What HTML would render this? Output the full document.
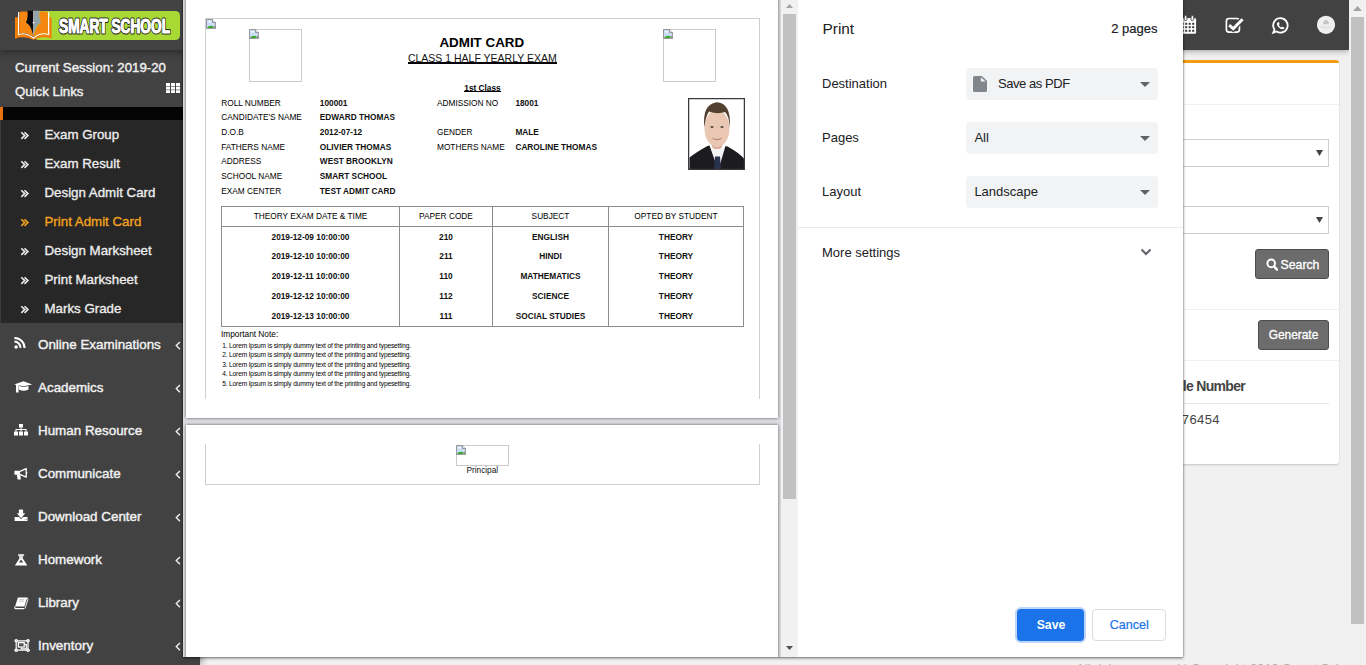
<!DOCTYPE html>
<html><head><meta charset="utf-8">
<style>
*{box-sizing:border-box;margin:0;padding:0}
html,body{width:1366px;height:665px;overflow:hidden;background:#f1f1f1;font-family:"Liberation Sans",sans-serif}
.a{position:absolute}
svg.a{display:block}
</style></head><body>

<div class="a" style="left:1076.00px;top:662.00px;font-size:13px;line-height:13px;font-weight:normal;color:#b0b0b0;white-space:nowrap;">All rights reserved | Copyright 2019 Smart School</div>
<div class="a" style="left:1100px;top:60px;width:239px;height:404px;background:#fff;border-top:3px solid #f39c12;border-radius:3px;box-shadow:0 1px 2px rgba(0,0,0,.18)"></div>
<div class="a" style="left:1100px;top:104px;width:239px;height:1px;background:#f0f0f0"></div>
<div class="a" style="left:1100px;top:139px;width:229px;height:28px;border:1px solid #cfcfcf;background:#fff"></div>
<svg class="a" style="left:1316px;top:150px;" width="7" height="6" viewBox="0 0 7 6"><path d="M0 0H7L3.5 6Z" fill="#444"/></svg>
<div class="a" style="left:1100px;top:206px;width:229px;height:28px;border:1px solid #cfcfcf;background:#fff"></div>
<svg class="a" style="left:1316px;top:217px;" width="7" height="6" viewBox="0 0 7 6"><path d="M0 0H7L3.5 6Z" fill="#444"/></svg>
<div class="a" style="left:1255px;top:249px;width:74px;height:30px;background:#6c6c6c;border:1px solid #4d4d4d;border-radius:3px"></div>
<svg class="a" style="left:1266px;top:258px;" width="12" height="13" viewBox="0 0 12 13"><circle cx="5.2" cy="5.4" r="3.8" fill="none" stroke="#fff" stroke-width="2"/><path d="M8 8.4L11 11.6" stroke="#fff" stroke-width="2.4" stroke-linecap="round"/></svg>
<div class="a" style="left:1280.50px;top:259.09px;font-size:12.3px;line-height:12.3px;font-weight:normal;color:#fff;white-space:nowrap;-webkit-text-stroke:0.3px #fff">Search</div>
<div class="a" style="left:1100px;top:309px;width:239px;height:1px;background:#f0f0f0"></div>
<div class="a" style="left:1258px;top:320px;width:71px;height:30px;background:#6c6c6c;border:1px solid #4d4d4d;border-radius:3px"></div>
<div class="a" style="left:1243.50px;width:100px;text-align:center;top:329.93px;font-size:11.9px;line-height:11.9px;font-weight:normal;color:#fff;white-space:nowrap;-webkit-text-stroke:0.3px #fff">Generate</div>
<div class="a" style="left:1100px;top:360px;width:239px;height:1px;background:#f0f0f0"></div>
<div class="a" style="left:1045.00px;width:200px;text-align:right;top:378.65px;font-size:14px;line-height:14px;font-weight:bold;color:#444;white-space:nowrap;letter-spacing:-0.7px">Mobile Number</div>
<div class="a" style="left:1100px;top:403px;width:229px;height:1px;background:#e6e6e6"></div>
<div class="a" style="left:1020.00px;width:200px;text-align:right;top:413.00px;font-size:13px;line-height:13px;font-weight:normal;color:#444;white-space:nowrap;letter-spacing:0.4px">9876454</div>
<div class="a" style="left:200px;top:0px;width:1149px;height:50px;background:#424242;box-shadow:0 1px 6px rgba(0,0,0,.35)"></div>
<svg class="a" style="left:1178px;top:14px;" width="20" height="22" viewBox="0 0 20 22"><rect x="3.5" y="4" width="14.6" height="15.8" rx="1.5" fill="#fff"/><rect x="3.7" y="8.8" width="2" height="2" fill="#3a3a3a"/><rect x="7.2" y="8.8" width="2" height="2" fill="#3a3a3a"/><rect x="10.7" y="8.8" width="2" height="2" fill="#3a3a3a"/><rect x="14.2" y="8.8" width="2" height="2" fill="#3a3a3a"/><rect x="3.7" y="12.2" width="2" height="2" fill="#3a3a3a"/><rect x="7.2" y="12.2" width="2" height="2" fill="#3a3a3a"/><rect x="10.7" y="12.2" width="2" height="2" fill="#3a3a3a"/><rect x="14.2" y="12.2" width="2" height="2" fill="#3a3a3a"/><rect x="3.7" y="15.8" width="2" height="2" fill="#3a3a3a"/><rect x="7.2" y="15.8" width="2" height="2" fill="#3a3a3a"/><rect x="10.7" y="15.8" width="2" height="2" fill="#3a3a3a"/><rect x="14.2" y="15.8" width="2" height="2" fill="#3a3a3a"/><rect x="6.2" y="1.6" width="2.8" height="5" rx="1.3" fill="#fff" stroke="#424242" stroke-width="0.9"/><rect x="13" y="1.6" width="2.8" height="5" rx="1.3" fill="#fff" stroke="#424242" stroke-width="0.9"/></svg>
<svg class="a" style="left:1224px;top:16px;" width="20" height="18" viewBox="0 0 20 18"><rect x="2.4" y="2.5" width="13" height="13.6" rx="2.6" fill="none" stroke="#fff" stroke-width="1.7"/><path d="M5.2 9.2L9.2 12.8L18.6 3.3" fill="none" stroke="#424242" stroke-width="5.5"/><path d="M5.2 9.2L9.2 12.8L18.6 3.3" fill="none" stroke="#fff" stroke-width="3"/></svg>
<svg class="a" style="left:1271px;top:16px;" width="19" height="19" viewBox="0 0 19 19"><path d="M9.5 2.2a7.2 7.2 0 1 1-3.9 13.3L2.2 16.8l1.3-3.3A7.2 7.2 0 0 1 9.5 2.2z" fill="none" stroke="#fff" stroke-width="1.8"/><path d="M6.8 6.2c.4-.4.9-.3 1.1.1l.7 1.4c.1.3 0 .6-.3.9l-.4.4c.5 1.1 1.4 2 2.5 2.5l.4-.4c.3-.3.6-.4.9-.3l1.4.7c.4.2.5.7.1 1.1-.9.9-2.2 1-3.4.3C8.1 12 7 10.9 6.3 9.6c-.6-1.2-.5-2.5.5-3.4z" fill="#fff"/></svg>
<svg class="a" style="left:1316px;top:15px;" width="20" height="20" viewBox="0 0 20 20"><circle cx="10" cy="9.8" r="9.1" fill="#f0f0f0"/><path d="M7 9.3Q7.3 5 10 4.7Q12.7 5 13 9.3Z" fill="#c6c6c6"/><rect x="4" y="11.6" width="11.5" height="1.1" fill="#d9d9d9"/><rect x="6" y="13.9" width="7.5" height="0.8" fill="#e3e3e3"/></svg>
<div class="a" style="left:1349px;top:0px;width:17px;height:665px;background:#f1f1f1"></div>
<svg class="a" style="left:1353px;top:6px;" width="9" height="5" viewBox="0 0 9 5"><path d="M0 5L4.5 0L9 5Z" fill="#a3a3a3"/></svg>
<div class="a" style="left:1351px;top:17px;width:13px;height:607px;background:#c1c1c1"></div>
<div class="a" style="left:0px;top:0px;width:200px;height:665px;background:#424242;box-shadow:2px 0 7px rgba(0,0,0,.35)"></div>
<div class="a" style="left:0px;top:0px;width:200px;height:50px;background:#434343;box-shadow:0 3px 6px rgba(0,0,0,.3)"></div>
<svg class="a" style="left:14px;top:10px;" width="168" height="32" viewBox="0 0 168 32">
<rect x="20" y="1" width="146" height="29" rx="4.5" fill="#a8d834"/>
<path d="M1 7.2H5V24Q12 22.5 19.5 27.5Q27 22.5 34 24V7.2H37.6V28.8Q30 25.5 19.5 29.8Q9 25.5 1 28.8Z" fill="#f07f0c"/>
<path d="M4.6 2V24.5Q12 22 19.5 28Q27 22 34.6 24.5V2" fill="none" stroke="#fff" stroke-width="1.2"/>
<path d="M5.3 3Q5.5 1.6 8 1.6H13.5Q14.5 8 12 12.6Q17 15 19.5 27Q12 21.5 5.3 23.6Z" fill="#f5860f"/>
<path d="M33.9 3Q33.7 1.6 31 1.6H25.5Q24.5 8 27 12.6Q22 15 19.5 27Q27 21.5 33.9 23.6Z" fill="#f5860f"/>
<path d="M13.5 0.8H19.5V25L18.2 21Q16.5 14.5 12 12.6Q14.5 8 13.5 0.8Z" fill="#0a0a0a"/>
<path d="M25.5 0.8H19.5V25L20.8 21Q22.5 14.5 27 12.6Q24.5 8 25.5 0.8Z" fill="#93a3aa"/>
<path d="M19.5 1V26" stroke="#e8e8e8" stroke-width="0.5"/>
<circle cx="19.5" cy="12.6" r="0.9" fill="#fff"/>
<text x="45" y="23.2" font-family="Liberation Sans" font-weight="bold" font-size="20.5" textLength="111" lengthAdjust="spacingAndGlyphs" fill="#fff" stroke="#2a2a2a" stroke-width="3.2" stroke-linejoin="round" paint-order="stroke">SMART SCHOOL</text>
<text x="45" y="23.2" font-family="Liberation Sans" font-weight="bold" font-size="20.5" textLength="111" lengthAdjust="spacingAndGlyphs" fill="#fff" stroke="#fff" stroke-width="0.9" stroke-linejoin="round">SMART SCHOOL</text>
</svg>
<div class="a" style="left:15.00px;top:61.38px;font-size:13.25px;line-height:13.25px;font-weight:normal;color:#f0f0f0;white-space:nowrap;-webkit-text-stroke:0.4px #f0f0f0">Current Session: 2019-20</div>
<div class="a" style="left:15.00px;top:85.38px;font-size:13.25px;line-height:13.25px;font-weight:normal;color:#f0f0f0;white-space:nowrap;-webkit-text-stroke:0.4px #f0f0f0">Quick Links</div>
<svg class="a" style="left:166px;top:83px;" width="14" height="10" viewBox="0 0 14 10"><rect x="0" y="0.0" width="4" height="3" fill="#fff"/><rect x="5" y="0.0" width="4" height="3" fill="#fff"/><rect x="10" y="0.0" width="4" height="3" fill="#fff"/><rect x="0" y="3.6" width="4" height="3" fill="#fff"/><rect x="5" y="3.6" width="4" height="3" fill="#fff"/><rect x="10" y="3.6" width="4" height="3" fill="#fff"/><rect x="0" y="7.2" width="4" height="3" fill="#fff"/><rect x="5" y="7.2" width="4" height="3" fill="#fff"/><rect x="10" y="7.2" width="4" height="3" fill="#fff"/></svg>
<div class="a" style="left:0px;top:107px;width:200px;height:13px;background:#050505;border-left:3px solid #e8730e"></div>
<div class="a" style="left:0px;top:120px;width:200px;height:203px;background:#272727;border-left:1px solid #3c3c3c"></div>
<svg class="a" style="left:20px;top:130.8px;" width="10" height="9" viewBox="0 0 10 9"><path d="M1.3 1.3L4.7 4.6L1.3 7.9M4.5 1.3L7.9 4.6L4.5 7.9" fill="none" stroke="#ececec" stroke-width="1.6"/></svg>
<div class="a" style="left:44.50px;top:128.44px;font-size:13.3px;line-height:13.3px;font-weight:normal;color:#ececec;white-space:nowrap;-webkit-text-stroke:0.35px #ececec">Exam Group</div>
<svg class="a" style="left:20px;top:159.8px;" width="10" height="9" viewBox="0 0 10 9"><path d="M1.3 1.3L4.7 4.6L1.3 7.9M4.5 1.3L7.9 4.6L4.5 7.9" fill="none" stroke="#ececec" stroke-width="1.6"/></svg>
<div class="a" style="left:44.50px;top:157.44px;font-size:13.3px;line-height:13.3px;font-weight:normal;color:#ececec;white-space:nowrap;-webkit-text-stroke:0.35px #ececec">Exam Result</div>
<svg class="a" style="left:20px;top:188.8px;" width="10" height="9" viewBox="0 0 10 9"><path d="M1.3 1.3L4.7 4.6L1.3 7.9M4.5 1.3L7.9 4.6L4.5 7.9" fill="none" stroke="#ececec" stroke-width="1.6"/></svg>
<div class="a" style="left:44.50px;top:186.44px;font-size:13.3px;line-height:13.3px;font-weight:normal;color:#ececec;white-space:nowrap;-webkit-text-stroke:0.35px #ececec">Design Admit Card</div>
<svg class="a" style="left:20px;top:217.8px;" width="10" height="9" viewBox="0 0 10 9"><path d="M1.3 1.3L4.7 4.6L1.3 7.9M4.5 1.3L7.9 4.6L4.5 7.9" fill="none" stroke="#f3a21e" stroke-width="1.6"/></svg>
<div class="a" style="left:44.50px;top:215.44px;font-size:13.3px;line-height:13.3px;font-weight:normal;color:#f3a21e;white-space:nowrap;-webkit-text-stroke:0.35px #f3a21e">Print Admit Card</div>
<svg class="a" style="left:20px;top:246.8px;" width="10" height="9" viewBox="0 0 10 9"><path d="M1.3 1.3L4.7 4.6L1.3 7.9M4.5 1.3L7.9 4.6L4.5 7.9" fill="none" stroke="#ececec" stroke-width="1.6"/></svg>
<div class="a" style="left:44.50px;top:244.44px;font-size:13.3px;line-height:13.3px;font-weight:normal;color:#ececec;white-space:nowrap;-webkit-text-stroke:0.35px #ececec">Design Marksheet</div>
<svg class="a" style="left:20px;top:275.8px;" width="10" height="9" viewBox="0 0 10 9"><path d="M1.3 1.3L4.7 4.6L1.3 7.9M4.5 1.3L7.9 4.6L4.5 7.9" fill="none" stroke="#ececec" stroke-width="1.6"/></svg>
<div class="a" style="left:44.50px;top:273.44px;font-size:13.3px;line-height:13.3px;font-weight:normal;color:#ececec;white-space:nowrap;-webkit-text-stroke:0.35px #ececec">Print Marksheet</div>
<svg class="a" style="left:20px;top:304.8px;" width="10" height="9" viewBox="0 0 10 9"><path d="M1.3 1.3L4.7 4.6L1.3 7.9M4.5 1.3L7.9 4.6L4.5 7.9" fill="none" stroke="#ececec" stroke-width="1.6"/></svg>
<div class="a" style="left:44.50px;top:302.44px;font-size:13.3px;line-height:13.3px;font-weight:normal;color:#ececec;white-space:nowrap;-webkit-text-stroke:0.35px #ececec">Marks Grade</div>
<svg class="a" style="left:14.3px;top:337.2px;" width="19" height="13" viewBox="0 0 19 13"><circle cx="2.1" cy="9.9" r="1.75" fill="#fff"/><path d="M0.4 4.6A6.1 6.1 0 0 1 6.5 10.9" fill="none" stroke="#fff" stroke-width="2"/><path d="M0.4 0.9A10 10 0 0 1 10.5 10.9" fill="none" stroke="#fff" stroke-width="2"/></svg>
<div class="a" style="left:38.00px;top:337.66px;font-size:13.4px;line-height:13.4px;font-weight:normal;color:#f2f2f2;white-space:nowrap;-webkit-text-stroke:0.4px #f2f2f2">Online Examinations</div>
<svg class="a" style="left:175px;top:341px;" width="6" height="9" viewBox="0 0 6 9"><path d="M4.9 1L1.3 4.6L4.9 8.2" fill="none" stroke="#f0f0f0" stroke-width="1.4"/></svg>
<svg class="a" style="left:14px;top:381px;" width="19" height="13" viewBox="0 0 19 13"><path d="M0.1 3.6L9.5 0.3L18.2 3.6L9.5 5.2Z" fill="#fff"/><path d="M4.9 5.1L9.5 5.9L14.5 5.1V8.6Q9.7 11 4.9 8.6Z" fill="#fff"/><path d="M3.3 3.8V11.5" stroke="#fff" stroke-width="2.6"/></svg>
<div class="a" style="left:38.00px;top:380.66px;font-size:13.4px;line-height:13.4px;font-weight:normal;color:#f2f2f2;white-space:nowrap;-webkit-text-stroke:0.4px #f2f2f2">Academics</div>
<svg class="a" style="left:175px;top:384px;" width="6" height="9" viewBox="0 0 6 9"><path d="M4.9 1L1.3 4.6L4.9 8.2" fill="none" stroke="#f0f0f0" stroke-width="1.4"/></svg>
<svg class="a" style="left:14.3px;top:423.7px;" width="19" height="13" viewBox="0 0 19 13"><rect x="5" y="0" width="4" height="3.5" fill="#fff"/><path d="M7 3.5V5.5M2 7.5V5.5H12V7.5M7 5.5V7.5" fill="none" stroke="#fff" stroke-width="1.1"/><rect x="0" y="7.5" width="4" height="4" fill="#fff"/><rect x="5" y="7.5" width="4" height="4" fill="#fff"/><rect x="10" y="7.5" width="4" height="4" fill="#fff"/></svg>
<div class="a" style="left:38.00px;top:423.66px;font-size:13.4px;line-height:13.4px;font-weight:normal;color:#f2f2f2;white-space:nowrap;-webkit-text-stroke:0.4px #f2f2f2">Human Resource</div>
<svg class="a" style="left:175px;top:427px;" width="6" height="9" viewBox="0 0 6 9"><path d="M4.9 1L1.3 4.6L4.9 8.2" fill="none" stroke="#f0f0f0" stroke-width="1.4"/></svg>
<svg class="a" style="left:14px;top:467.5px;" width="19" height="13" viewBox="0 0 19 13"><rect x="0.4" y="2.8" width="5.6" height="4" rx="0.6" fill="#fff"/><path d="M2.8 6.4H6.4L6.8 11.6H3.6Z" fill="#fff"/><path d="M6 3.4L12.2 0.6V9.2L6 6.4" fill="none" stroke="#fff" stroke-width="1.3" stroke-linejoin="round"/><circle cx="12.8" cy="5" r="0.7" fill="#fff"/></svg>
<div class="a" style="left:38.00px;top:466.66px;font-size:13.4px;line-height:13.4px;font-weight:normal;color:#f2f2f2;white-space:nowrap;-webkit-text-stroke:0.4px #f2f2f2">Communicate</div>
<svg class="a" style="left:175px;top:470px;" width="6" height="9" viewBox="0 0 6 9"><path d="M4.9 1L1.3 4.6L4.9 8.2" fill="none" stroke="#f0f0f0" stroke-width="1.4"/></svg>
<svg class="a" style="left:14px;top:509px;" width="19" height="13" viewBox="0 0 19 13"><rect x="4.9" y="0.4" width="4.2" height="4.4" rx="0.6" fill="#fff"/><path d="M2.9 4.2H11.2L7 9.2Z" fill="#fff"/><path d="M0.6 8.1H5L7 10.2L9 8.1H13.5V11.9H0.6Z" fill="#fff"/><rect x="10.6" y="9.9" width="0.8" height="0.8" fill="#777"/><rect x="12" y="9.9" width="0.8" height="0.8" fill="#777"/></svg>
<div class="a" style="left:38.00px;top:509.66px;font-size:13.4px;line-height:13.4px;font-weight:normal;color:#f2f2f2;white-space:nowrap;-webkit-text-stroke:0.4px #f2f2f2">Download Center</div>
<svg class="a" style="left:175px;top:513px;" width="6" height="9" viewBox="0 0 6 9"><path d="M4.9 1L1.3 4.6L4.9 8.2" fill="none" stroke="#f0f0f0" stroke-width="1.4"/></svg>
<svg class="a" style="left:14px;top:553.5px;" width="19" height="13" viewBox="0 0 19 13"><rect x="4" y="0.2" width="6.2" height="1.6" rx="0.5" fill="#fff"/><path d="M5.4 1.6H8.8V4.4L13.2 11.2Q13.3 11.6 12.8 11.6H1.4Q0.9 11.6 1 11.2L5.4 4.4Z" fill="#fff"/><path d="M7.1 5.4L9.2 8.6H5Z" fill="#424242"/><rect x="5.4" y="1.8" width="3.4" height="2.8" fill="#ddd"/></svg>
<div class="a" style="left:38.00px;top:552.66px;font-size:13.4px;line-height:13.4px;font-weight:normal;color:#f2f2f2;white-space:nowrap;-webkit-text-stroke:0.4px #f2f2f2">Homework</div>
<svg class="a" style="left:175px;top:556px;" width="6" height="9" viewBox="0 0 6 9"><path d="M4.9 1L1.3 4.6L4.9 8.2" fill="none" stroke="#f0f0f0" stroke-width="1.4"/></svg>
<svg class="a" style="left:14px;top:596.5px;" width="19" height="13" viewBox="0 0 19 13"><path d="M3.9 0.6H13.2L10.4 9.6H1.1Z" fill="#fff"/><path d="M1.1 9.6Q0.2 11.6 1.8 11.6H10.2" fill="none" stroke="#fff" stroke-width="1.1"/><path d="M13.2 0.6L13.9 2.4L11 11.6" fill="none" stroke="#fff" stroke-width="0.9"/><rect x="5.2" y="2.4" width="5" height="0.9" fill="#b5b5b5"/><rect x="5" y="4" width="4.4" height="0.8" fill="#c5c5c5"/></svg>
<div class="a" style="left:38.00px;top:595.66px;font-size:13.4px;line-height:13.4px;font-weight:normal;color:#f2f2f2;white-space:nowrap;-webkit-text-stroke:0.4px #f2f2f2">Library</div>
<svg class="a" style="left:175px;top:599px;" width="6" height="9" viewBox="0 0 6 9"><path d="M4.9 1L1.3 4.6L4.9 8.2" fill="none" stroke="#f0f0f0" stroke-width="1.4"/></svg>
<svg class="a" style="left:14.3px;top:638.7px;" width="19" height="13" viewBox="0 0 19 13"><path d="M2.2 1.8H14V11.2H2.2Z" fill="none" stroke="#fff" stroke-width="1.2"/><circle cx="2.2" cy="1.8" r="1.8" fill="#fff"/><circle cx="14" cy="1.8" r="1.8" fill="#fff"/><circle cx="2.2" cy="11.2" r="1.8" fill="#fff"/><circle cx="14" cy="11.2" r="1.8" fill="#fff"/><circle cx="2.2" cy="1.8" r="0.5" fill="#999"/><circle cx="14" cy="1.8" r="0.5" fill="#999"/><circle cx="2.2" cy="11.2" r="0.5" fill="#999"/><circle cx="14" cy="11.2" r="0.5" fill="#999"/><path d="M7.3 8.3V9.8H12.3V5.3H10.6" fill="none" stroke="#fff" stroke-width="1.2"/><rect x="4.4" y="3.6" width="5.8" height="4.4" fill="none" stroke="#fff" stroke-width="1.3"/><rect x="5.6" y="5.3" width="3.4" height="0.6" fill="#888"/></svg>
<div class="a" style="left:38.00px;top:638.66px;font-size:13.4px;line-height:13.4px;font-weight:normal;color:#f2f2f2;white-space:nowrap;-webkit-text-stroke:0.4px #f2f2f2">Inventory</div>
<svg class="a" style="left:175px;top:642px;" width="6" height="9" viewBox="0 0 6 9"><path d="M4.9 1L1.3 4.6L4.9 8.2" fill="none" stroke="#f0f0f0" stroke-width="1.4"/></svg>
<div class="a" style="left:183px;top:0px;width:1000px;height:657px;background:#fff;box-shadow:0 1px 3px rgba(0,0,0,.55),0 0 1px rgba(0,0,0,.4)"></div>
<div class="a" style="left:0;top:0;width:798px;height:657px;overflow:hidden">
<div class="a" style="left:183px;top:0px;width:615px;height:657px;background:#dcdde1"></div>
<div class="a" style="left:186px;top:-1px;width:592px;height:419px;background:#fff;box-shadow:0 0 3px rgba(0,0,0,.6)"></div>
<div class="a" style="left:186px;top:425px;width:592px;height:300px;background:#fff;box-shadow:0 0 3px rgba(0,0,0,.6)"></div>
<div class="a" style="left:205px;top:18px;width:555px;height:381px;border:1px solid #cfcfcf;border-bottom:none"></div>
<svg class="a" style="left:206px;top:19px;" width="10" height="10" viewBox="0 0 10 10"><path d="M0.5 0.5H6.5L9.5 3.5V6L6.8 9.5H0.5Z" fill="#c9dbf6" stroke="#8e8e8e" stroke-width="0.9"/><path d="M0.9 9.1Q3.5 5.3 7.8 7.6L6.6 9.1Z" fill="#3aa82a"/><path d="M9.5 6.8V9.5H7.6Z" fill="#3aa82a" stroke="#8e8e8e" stroke-width="0.9"/><path d="M6.5 0.5V3.5H9.5" fill="#eee" stroke="#8e8e8e" stroke-width="0.9"/><rect x="2" y="2" width="3" height="1.5" fill="#eef4fd"/></svg>
<div class="a" style="left:249px;top:29px;width:53px;height:53px;border:1px solid #cbcbcb"></div>
<svg class="a" style="left:249px;top:29px;" width="10" height="10" viewBox="0 0 10 10"><path d="M0.5 0.5H6.5L9.5 3.5V6L6.8 9.5H0.5Z" fill="#c9dbf6" stroke="#8e8e8e" stroke-width="0.9"/><path d="M0.9 9.1Q3.5 5.3 7.8 7.6L6.6 9.1Z" fill="#3aa82a"/><path d="M9.5 6.8V9.5H7.6Z" fill="#3aa82a" stroke="#8e8e8e" stroke-width="0.9"/><path d="M6.5 0.5V3.5H9.5" fill="#eee" stroke="#8e8e8e" stroke-width="0.9"/><rect x="2" y="2" width="3" height="1.5" fill="#eef4fd"/></svg>
<div class="a" style="left:663px;top:29px;width:53px;height:53px;border:1px solid #cbcbcb"></div>
<svg class="a" style="left:663px;top:29px;" width="10" height="10" viewBox="0 0 10 10"><path d="M0.5 0.5H6.5L9.5 3.5V6L6.8 9.5H0.5Z" fill="#c9dbf6" stroke="#8e8e8e" stroke-width="0.9"/><path d="M0.9 9.1Q3.5 5.3 7.8 7.6L6.6 9.1Z" fill="#3aa82a"/><path d="M9.5 6.8V9.5H7.6Z" fill="#3aa82a" stroke="#8e8e8e" stroke-width="0.9"/><path d="M6.5 0.5V3.5H9.5" fill="#eee" stroke="#8e8e8e" stroke-width="0.9"/><rect x="2" y="2" width="3" height="1.5" fill="#eef4fd"/></svg>
<div class="a" style="left:381.80px;width:200px;text-align:center;top:35.66px;font-size:13.4px;line-height:13.4px;font-weight:bold;color:#000;white-space:nowrap;">ADMIT CARD</div>
<div class="a" style="left:357.30px;width:250px;text-align:center;top:53.31px;font-size:10.5px;line-height:10.5px;font-weight:normal;color:#111;white-space:nowrap;">CLASS 1 HALF YEARLY EXAM</div>
<div class="a" style="left:408px;top:62px;width:149px;height:1.9px;background:#000"></div>
<div class="a" style="left:432.50px;width:100px;text-align:center;top:83.87px;font-size:8.3px;line-height:8.3px;font-weight:bold;color:#000;white-space:nowrap;">1st Class</div>
<div class="a" style="left:464px;top:90.9px;width:37px;height:1.2px;background:#000"></div>
<div class="a" style="left:221.20px;top:99.27px;font-size:8.3px;line-height:8.3px;font-weight:normal;color:#000;white-space:nowrap;">ROLL NUMBER</div>
<div class="a" style="left:319.80px;top:99.27px;font-size:8.3px;line-height:8.3px;font-weight:bold;color:#111;white-space:nowrap;">100001</div>
<div class="a" style="left:437.00px;top:99.27px;font-size:8.3px;line-height:8.3px;font-weight:normal;color:#000;white-space:nowrap;">ADMISSION NO</div>
<div class="a" style="left:515.40px;top:99.27px;font-size:8.3px;line-height:8.3px;font-weight:bold;color:#111;white-space:nowrap;">18001</div>
<div class="a" style="left:221.20px;top:113.07px;font-size:8.3px;line-height:8.3px;font-weight:normal;color:#000;white-space:nowrap;">CANDIDATE&#x27;S NAME</div>
<div class="a" style="left:319.80px;top:113.07px;font-size:8.3px;line-height:8.3px;font-weight:bold;color:#111;white-space:nowrap;">EDWARD THOMAS</div>
<div class="a" style="left:221.20px;top:127.97px;font-size:8.3px;line-height:8.3px;font-weight:normal;color:#000;white-space:nowrap;">D.O.B</div>
<div class="a" style="left:319.80px;top:127.97px;font-size:8.3px;line-height:8.3px;font-weight:bold;color:#111;white-space:nowrap;">2012-07-12</div>
<div class="a" style="left:437.00px;top:127.97px;font-size:8.3px;line-height:8.3px;font-weight:normal;color:#000;white-space:nowrap;">GENDER</div>
<div class="a" style="left:515.40px;top:127.97px;font-size:8.3px;line-height:8.3px;font-weight:bold;color:#111;white-space:nowrap;">MALE</div>
<div class="a" style="left:221.20px;top:142.97px;font-size:8.3px;line-height:8.3px;font-weight:normal;color:#000;white-space:nowrap;">FATHERS NAME</div>
<div class="a" style="left:319.80px;top:142.97px;font-size:8.3px;line-height:8.3px;font-weight:bold;color:#111;white-space:nowrap;">OLIVIER THOMAS</div>
<div class="a" style="left:437.00px;top:142.97px;font-size:8.3px;line-height:8.3px;font-weight:normal;color:#000;white-space:nowrap;">MOTHERS NAME</div>
<div class="a" style="left:515.40px;top:142.97px;font-size:8.3px;line-height:8.3px;font-weight:bold;color:#111;white-space:nowrap;">CAROLINE THOMAS</div>
<div class="a" style="left:221.20px;top:156.97px;font-size:8.3px;line-height:8.3px;font-weight:normal;color:#000;white-space:nowrap;">ADDRESS</div>
<div class="a" style="left:319.80px;top:156.97px;font-size:8.3px;line-height:8.3px;font-weight:bold;color:#111;white-space:nowrap;">WEST BROOKLYN</div>
<div class="a" style="left:221.20px;top:171.87px;font-size:8.3px;line-height:8.3px;font-weight:normal;color:#000;white-space:nowrap;">SCHOOL NAME</div>
<div class="a" style="left:319.80px;top:171.87px;font-size:8.3px;line-height:8.3px;font-weight:bold;color:#111;white-space:nowrap;">SMART SCHOOL</div>
<div class="a" style="left:221.20px;top:186.97px;font-size:8.3px;line-height:8.3px;font-weight:normal;color:#000;white-space:nowrap;">EXAM CENTER</div>
<div class="a" style="left:319.80px;top:186.97px;font-size:8.3px;line-height:8.3px;font-weight:bold;color:#111;white-space:nowrap;">TEST ADMIT CARD</div>
<svg class="a" style="left:688px;top:98px;" width="57" height="72" viewBox="0 0 57 72"><g transform="translate(0.5,0.5)"><rect x="0" y="0" width="56" height="71" fill="#fff"/>
<path d="M22 40Q22 50 28.5 53Q35 50 35 40Z" fill="#d9ad95"/>
<ellipse cx="28.5" cy="30" rx="12.5" ry="18.5" fill="#e9c7b3"/>
<path d="M15.8 29Q13.5 6 28 3.8Q43 4.5 41.3 29Q40.5 17 36.5 13.5Q29 16 20.5 13Q17 18 15.8 29Z" fill="#54402f"/>
<ellipse cx="23.5" cy="28.5" rx="1.6" ry="1" fill="#5a4a40"/><ellipse cx="33.5" cy="28.5" rx="1.6" ry="1" fill="#5a4a40"/>
<path d="M24 40Q28.5 42.5 33 40" fill="none" stroke="#b07a68" stroke-width="1"/>
<path d="M19 48L29 71H38L38.5 48Q29 53 19 48Z" fill="#f3f3f3"/>
<path d="M1 71V59Q8 53.5 19 47.5L21 47L29.5 71Z" fill="#1b1b20"/>
<path d="M55.5 71V60Q50 54 39 48L37 47.5L30 71Z" fill="#1b1b20"/>
<path d="M26.5 58L31.5 58L32.5 71H25.5Z" fill="#27324e"/>
<rect x="0" y="0" width="56" height="71" fill="none" stroke="#3a3a3a" stroke-width="1.5"/></g></svg>
<div class="a" style="left:221px;top:206px;width:523px;height:121px;border:1px solid #8c8c8c"></div>
<div class="a" style="left:221px;top:226px;width:523px;height:1px;background:#8c8c8c"></div>
<div class="a" style="left:399px;top:206px;width:1px;height:121px;background:#8c8c8c"></div>
<div class="a" style="left:492px;top:206px;width:1px;height:121px;background:#8c8c8c"></div>
<div class="a" style="left:608px;top:206px;width:1px;height:121px;background:#8c8c8c"></div>
<div class="a" style="left:210.50px;width:200px;text-align:center;top:212.17px;font-size:8.3px;line-height:8.3px;font-weight:normal;color:#000;white-space:nowrap;">THEORY EXAM DATE &amp; TIME</div>
<div class="a" style="left:346.00px;width:200px;text-align:center;top:212.17px;font-size:8.3px;line-height:8.3px;font-weight:normal;color:#000;white-space:nowrap;">PAPER CODE</div>
<div class="a" style="left:450.50px;width:200px;text-align:center;top:212.17px;font-size:8.3px;line-height:8.3px;font-weight:normal;color:#000;white-space:nowrap;">SUBJECT</div>
<div class="a" style="left:576.00px;width:200px;text-align:center;top:212.17px;font-size:8.3px;line-height:8.3px;font-weight:normal;color:#000;white-space:nowrap;">OPTED BY STUDENT</div>
<div class="a" style="left:210.50px;width:200px;text-align:center;top:233.07px;font-size:8.3px;line-height:8.3px;font-weight:bold;color:#111;white-space:nowrap;">2019-12-09 10:00:00</div>
<div class="a" style="left:346.00px;width:200px;text-align:center;top:233.07px;font-size:8.3px;line-height:8.3px;font-weight:bold;color:#111;white-space:nowrap;">210</div>
<div class="a" style="left:450.50px;width:200px;text-align:center;top:233.07px;font-size:8.3px;line-height:8.3px;font-weight:bold;color:#111;white-space:nowrap;">ENGLISH</div>
<div class="a" style="left:576.00px;width:200px;text-align:center;top:233.07px;font-size:8.3px;line-height:8.3px;font-weight:bold;color:#111;white-space:nowrap;">THEORY</div>
<div class="a" style="left:210.50px;width:200px;text-align:center;top:252.07px;font-size:8.3px;line-height:8.3px;font-weight:bold;color:#111;white-space:nowrap;">2019-12-10 10:00:00</div>
<div class="a" style="left:346.00px;width:200px;text-align:center;top:252.07px;font-size:8.3px;line-height:8.3px;font-weight:bold;color:#111;white-space:nowrap;">211</div>
<div class="a" style="left:450.50px;width:200px;text-align:center;top:252.07px;font-size:8.3px;line-height:8.3px;font-weight:bold;color:#111;white-space:nowrap;">HINDI</div>
<div class="a" style="left:576.00px;width:200px;text-align:center;top:252.07px;font-size:8.3px;line-height:8.3px;font-weight:bold;color:#111;white-space:nowrap;">THEORY</div>
<div class="a" style="left:210.50px;width:200px;text-align:center;top:272.07px;font-size:8.3px;line-height:8.3px;font-weight:bold;color:#111;white-space:nowrap;">2019-12-11 10:00:00</div>
<div class="a" style="left:346.00px;width:200px;text-align:center;top:272.07px;font-size:8.3px;line-height:8.3px;font-weight:bold;color:#111;white-space:nowrap;">110</div>
<div class="a" style="left:450.50px;width:200px;text-align:center;top:272.07px;font-size:8.3px;line-height:8.3px;font-weight:bold;color:#111;white-space:nowrap;">MATHEMATICS</div>
<div class="a" style="left:576.00px;width:200px;text-align:center;top:272.07px;font-size:8.3px;line-height:8.3px;font-weight:bold;color:#111;white-space:nowrap;">THEORY</div>
<div class="a" style="left:210.50px;width:200px;text-align:center;top:292.07px;font-size:8.3px;line-height:8.3px;font-weight:bold;color:#111;white-space:nowrap;">2019-12-12 10:00:00</div>
<div class="a" style="left:346.00px;width:200px;text-align:center;top:292.07px;font-size:8.3px;line-height:8.3px;font-weight:bold;color:#111;white-space:nowrap;">112</div>
<div class="a" style="left:450.50px;width:200px;text-align:center;top:292.07px;font-size:8.3px;line-height:8.3px;font-weight:bold;color:#111;white-space:nowrap;">SCIENCE</div>
<div class="a" style="left:576.00px;width:200px;text-align:center;top:292.07px;font-size:8.3px;line-height:8.3px;font-weight:bold;color:#111;white-space:nowrap;">THEORY</div>
<div class="a" style="left:210.50px;width:200px;text-align:center;top:311.87px;font-size:8.3px;line-height:8.3px;font-weight:bold;color:#111;white-space:nowrap;">2019-12-13 10:00:00</div>
<div class="a" style="left:346.00px;width:200px;text-align:center;top:311.87px;font-size:8.3px;line-height:8.3px;font-weight:bold;color:#111;white-space:nowrap;">111</div>
<div class="a" style="left:450.50px;width:200px;text-align:center;top:311.87px;font-size:8.3px;line-height:8.3px;font-weight:bold;color:#111;white-space:nowrap;">SOCIAL STUDIES</div>
<div class="a" style="left:576.00px;width:200px;text-align:center;top:311.87px;font-size:8.3px;line-height:8.3px;font-weight:bold;color:#111;white-space:nowrap;">THEORY</div>
<div class="a" style="left:221.00px;top:330.47px;font-size:8.3px;line-height:8.3px;font-weight:normal;color:#000;white-space:nowrap;">Important Note:</div>
<div class="a" style="left:222.20px;top:342.61px;font-size:6.6px;line-height:6.6px;font-weight:normal;color:#000;white-space:nowrap;letter-spacing:-0.15px">1. Lorem Ipsum is simply dummy text of the printing and typesetting.</div>
<div class="a" style="left:222.20px;top:352.21px;font-size:6.6px;line-height:6.6px;font-weight:normal;color:#000;white-space:nowrap;letter-spacing:-0.15px">2. Lorem Ipsum is simply dummy text of the printing and typesetting.</div>
<div class="a" style="left:222.20px;top:361.51px;font-size:6.6px;line-height:6.6px;font-weight:normal;color:#000;white-space:nowrap;letter-spacing:-0.15px">3. Lorem Ipsum is simply dummy text of the printing and typesetting.</div>
<div class="a" style="left:222.20px;top:371.41px;font-size:6.6px;line-height:6.6px;font-weight:normal;color:#000;white-space:nowrap;letter-spacing:-0.15px">4. Lorem Ipsum is simply dummy text of the printing and typesetting.</div>
<div class="a" style="left:222.20px;top:380.61px;font-size:6.6px;line-height:6.6px;font-weight:normal;color:#000;white-space:nowrap;letter-spacing:-0.15px">5. Lorem Ipsum is simply dummy text of the printing and typesetting.</div>
<div class="a" style="left:205px;top:444px;width:555px;height:41px;border:1px solid #cfcfcf;border-top:none"></div>
<div class="a" style="left:456px;top:445px;width:53px;height:21px;border:1px solid #cbcbcb"></div>
<svg class="a" style="left:456px;top:445px;" width="10" height="10" viewBox="0 0 10 10"><path d="M0.5 0.5H6.5L9.5 3.5V6L6.8 9.5H0.5Z" fill="#c9dbf6" stroke="#8e8e8e" stroke-width="0.9"/><path d="M0.9 9.1Q3.5 5.3 7.8 7.6L6.6 9.1Z" fill="#3aa82a"/><path d="M9.5 6.8V9.5H7.6Z" fill="#3aa82a" stroke="#8e8e8e" stroke-width="0.9"/><path d="M6.5 0.5V3.5H9.5" fill="#eee" stroke="#8e8e8e" stroke-width="0.9"/><rect x="2" y="2" width="3" height="1.5" fill="#eef4fd"/></svg>
<div class="a" style="left:432.30px;width:100px;text-align:center;top:465.97px;font-size:8.3px;line-height:8.3px;font-weight:normal;color:#111;white-space:nowrap;">Principal</div>
</div>
<div class="a" style="left:781px;top:0px;width:17px;height:657px;background:#f1f1f1"></div>
<svg class="a" style="left:786px;top:4px;" width="7" height="4" viewBox="0 0 7 4"><path d="M0 4L3.5 0L7 4Z" fill="#a3a3a3"/></svg>
<svg class="a" style="left:786px;top:646px;" width="7" height="4" viewBox="0 0 7 4"><path d="M0 0L3.5 4L7 0Z" fill="#505050"/></svg>
<div class="a" style="left:783px;top:14px;width:13px;height:485px;background:#c1c1c1"></div>
<div class="a" style="left:822.50px;top:20.96px;font-size:15.4px;line-height:15.4px;font-weight:normal;color:#202124;white-space:nowrap;">Print</div>
<div class="a" style="left:957.50px;width:200px;text-align:right;top:22.00px;font-size:13px;line-height:13px;font-weight:normal;color:#202124;white-space:nowrap;-webkit-text-stroke:0.2px #202124">2 pages</div>
<div class="a" style="left:822.00px;top:77.00px;font-size:13px;line-height:13px;font-weight:normal;color:#202124;white-space:nowrap;">Destination</div>
<div class="a" style="left:966px;top:68px;width:192px;height:32px;background:#f1f3f4;border-radius:4px"></div>
<svg class="a" style="left:973px;top:76px" width="14" height="16" viewBox="4 2 16 20" preserveAspectRatio="none"><path d="M6 2c-1.1 0-2 .9-2 2v16c0 1.1.9 2 2 2h12c1.1 0 2-.9 2-2V8l-6-6H6zm7 7V3.5L18.5 9H13z" fill="#80868b"/></svg>
<div class="a" style="left:998.00px;top:77.00px;font-size:13px;line-height:13px;font-weight:normal;color:#202124;white-space:nowrap;letter-spacing:-0.45px">Save as PDF</div>
<svg class="a" style="left:1140px;top:81.5px;" width="10" height="5" viewBox="0 0 10 5"><path d="M0 0H10L5 5Z" fill="#5f6368"/></svg>
<div class="a" style="left:822.00px;top:131.00px;font-size:13px;line-height:13px;font-weight:normal;color:#202124;white-space:nowrap;">Pages</div>
<div class="a" style="left:966px;top:122px;width:192px;height:32px;background:#f1f3f4;border-radius:4px"></div>
<div class="a" style="left:974.40px;top:131.00px;font-size:13px;line-height:13px;font-weight:normal;color:#202124;white-space:nowrap;">All</div>
<svg class="a" style="left:1140px;top:135.5px;" width="10" height="5" viewBox="0 0 10 5"><path d="M0 0H10L5 5Z" fill="#5f6368"/></svg>
<div class="a" style="left:822.00px;top:185.00px;font-size:13px;line-height:13px;font-weight:normal;color:#202124;white-space:nowrap;">Layout</div>
<div class="a" style="left:966px;top:176px;width:192px;height:32px;background:#f1f3f4;border-radius:4px"></div>
<div class="a" style="left:974.40px;top:185.00px;font-size:13px;line-height:13px;font-weight:normal;color:#202124;white-space:nowrap;">Landscape</div>
<svg class="a" style="left:1140px;top:189.5px;" width="10" height="5" viewBox="0 0 10 5"><path d="M0 0H10L5 5Z" fill="#5f6368"/></svg>
<div class="a" style="left:798px;top:227px;width:385px;height:1px;background:#e8eaed"></div>
<div class="a" style="left:822.00px;top:245.80px;font-size:13px;line-height:13px;font-weight:normal;color:#202124;white-space:nowrap;">More settings</div>
<svg class="a" style="left:1140px;top:248px;" width="12" height="8" viewBox="0 0 12 8"><path d="M1.5 1.5L6 6L10.5 1.5" fill="none" stroke="#5f6368" stroke-width="2"/></svg>
<div class="a" style="left:1015px;top:607px;width:71px;height:36px;border-radius:6px;background:#a8c7fa;opacity:.75"></div>
<div class="a" style="left:1017px;top:609px;width:67px;height:32px;background:#1a73e8;border-radius:4px"></div>
<div class="a" style="left:1011.00px;width:80px;text-align:center;top:618.59px;font-size:12.3px;line-height:12.3px;font-weight:bold;color:#fff;white-space:nowrap;">Save</div>
<div class="a" style="left:1092px;top:609px;width:74px;height:32px;background:#fff;border:1px solid #dadce0;border-radius:4px"></div>
<div class="a" style="left:1089.30px;width:80px;text-align:center;top:618.83px;font-size:12.6px;line-height:12.6px;font-weight:normal;color:#1a73e8;white-space:nowrap;-webkit-text-stroke:0.2px #1a73e8">Cancel</div>
</body></html>
